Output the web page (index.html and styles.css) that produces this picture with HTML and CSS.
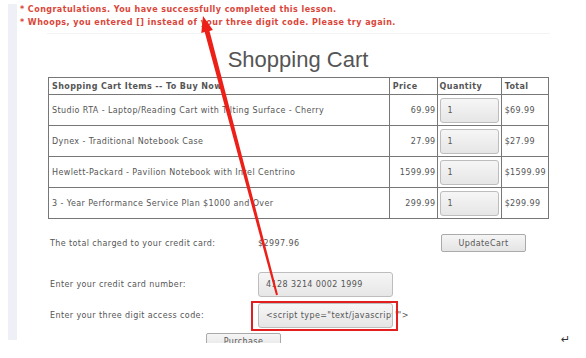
FILE: index.html
```html
<!DOCTYPE html>
<html>
<head>
<meta charset="utf-8">
<link rel="stylesheet" href="styles.css">
</head>
<body>
<div class="frame">
  <div class="strip"></div>
  <div class="content">
    <div class="msgs">
      <div>* Congratulations. You have successfully completed this lesson.</div>
      <div>* Whoops, you entered [] instead of your three digit code. Please try again.</div>
    </div>
    <div class="main">
      <div class="rule"></div>
      <h1 class="title">Shopping Cart</h1>
      <table class="cart">
        <tr class="head">
          <th class="c-item">Shopping Cart Items -- To Buy Now</th>
          <th class="c-price">Price</th>
          <th class="c-qty">Quantity</th>
          <th class="c-total">Total</th>
        </tr>
        <tr>
          <td class="c-item">Studio RTA - Laptop/Reading Cart with Tilting Surface - Cherry</td>
          <td class="c-price num">69.99</td>
          <td class="c-qty"><input class="qty" value="1"></td>
          <td class="c-total">$69.99</td>
        </tr>
        <tr>
          <td class="c-item">Dynex - Traditional Notebook Case</td>
          <td class="c-price num">27.99</td>
          <td class="c-qty"><input class="qty" value="1"></td>
          <td class="c-total">$27.99</td>
        </tr>
        <tr>
          <td class="c-item">Hewlett-Packard - Pavilion Notebook with Intel Centrino</td>
          <td class="c-price num">1599.99</td>
          <td class="c-qty"><input class="qty" value="1"></td>
          <td class="c-total">$1599.99</td>
        </tr>
        <tr>
          <td class="c-item">3 - Year Performance Service Plan $1000 and Over</td>
          <td class="c-price num">299.99</td>
          <td class="c-qty"><input class="qty" value="1"></td>
          <td class="c-total">$299.99</td>
        </tr>
      </table>
      <div class="form">
        <div class="frow r1">
          <span class="label">The total charged to your credit card:</span>
          <span class="value">$2997.96</span>
          <span><button class="btn update">UpdateCart</button></span>
        </div>
        <div class="frow r2">
          <span class="label">Enter your credit card number:</span>
          <span><input class="field" value="4128 3214 0002 1999"></span>
          <span></span>
        </div>
        <div class="frow r3">
          <span class="label">Enter your three digit access code:</span>
          <span class="codecell"><span class="field codefield">&lt;script type="text/javascript"&gt;alert(document.cookie);&lt;/script&gt;</span><span class="tail">'"&gt;</span></span>
          <span></span>
        </div>
        <div class="frow r4">
          <button class="btn purchase">Purchase</button>
        </div>
      </div>
    </div>
  </div>
</div>
<div class="highlight"></div>
<svg class="arrow" width="586" height="358" viewBox="0 0 586 358">
  <polygon points="203,16 212.9,30 209.5,30.9 278,294.7 276,295.3 204.7,32.1 201.3,33" fill="#ec2018"/>
</svg>
<span class="ret">↵</span>
</body>
</html>
```

FILE: styles.css
```css
html, body {
  margin: 0;
  padding: 0;
  background: #fff;
}

body {
  width: 586px;
  height: 358px;
  overflow: hidden;
  position: relative;
  font-family: "DejaVu Sans", sans-serif;
  font-size: 8px;
  letter-spacing: 0.4px;
  color: #555;
}

.frame {
  display: flex;
  height: 343px;
  overflow: hidden;
}

.strip {
  width: 9px;
  height: 336px;
  margin: 4px 0 0 8px;
  background: #efeff8;
  flex: none;
}

.content {
  flex: 1;
  padding-left: 3px;
}

.msgs {
  margin-top: 3px;
  font-weight: bold;
  color: #da463a;
  line-height: 13px;
  letter-spacing: 0.45px;
}

.main {
  margin-left: 28px;
  width: 500px;
}

.rule {
  height: 1px;
  margin: 4px 0 0 -1px;
  width: 503px;
  background: #f3f3f3;
}

.title {
  margin: 13px 0 4px;
  text-align: center;
  font-family: "Liberation Sans", Arial, sans-serif;
  font-weight: normal;
  font-size: 22px;
  line-height: 26px;
  letter-spacing: 0;
  color: #555;
}

.cart {
  width: 501px;
  border-collapse: collapse;
  border: 1px solid #777;
}

.cart th, .cart td {
  border: 1px solid #777;
  padding: 0 2px 0 3px;
  text-align: left;
  white-space: nowrap;
  font-size: 8px;
  overflow: hidden;
}

.cart th {
  font-weight: bold;
  height: 16px;
  color: #555;
}

.cart td {
  height: 30px;
}

.c-item { width: 336px; }
.c-price { width: 42px; }
.c-qty { width: 58px; }
.c-qty.c-qty { padding: 0 2px; }
.num { text-align: right !important; padding-right: 1px !important; }

.qty, .field {
  box-sizing: border-box;
  height: 25px;
  border: 1px solid #bdbdbd;
  border-radius: 3px;
  background: linear-gradient(#f6f6f6, #e6e6e6);
  font-family: "DejaVu Sans", sans-serif;
  font-size: 8px;
  letter-spacing: 0.4px;
  color: #555;
  padding: 0 0 0 7px;
  margin: 0;
  display: block;
}

.qty {
  width: 59px;
}

.field {
  width: 135px;
}

.codefield {
  display: flex;
  align-items: center;
  white-space: nowrap;
  overflow: hidden;
  flex: none;
}

.form {
  margin-top: 9px;
  display: flex;
  flex-direction: column;
}

.frow {
  display: grid;
  grid-template-columns: 210px 183px auto;
  align-items: center;
}

.r1 { height: 30px; }
.r2 { height: 37px; margin-top: 8px; }
.r3 { height: 25px; }
.r4 { height: 27px; display: flex; padding-left: 158px; }

.label {
  padding-left: 2px;
}

.codecell {
  display: flex;
  align-items: center;
}

.tail {
  margin-left: 2px;
}

.btn {
  box-sizing: border-box;
  height: 18px;
  border: 1px solid #aaa;
  border-radius: 2px;
  background: linear-gradient(#f5f5f5, #e4e4e4);
  font-family: "DejaVu Sans", sans-serif;
  font-size: 8px;
  letter-spacing: 0.4px;
  color: #555;
  padding: 0;
}

.update { width: 85px; }
.purchase { width: 75px; }

.highlight {
  position: absolute;
  left: 251px;
  top: 301px;
  width: 143px;
  height: 26px;
  border: 2px solid #e41e1e;
}

.arrow {
  position: absolute;
  left: 0;
  top: 0;
  pointer-events: none;
}

.ret {
  position: absolute;
  left: 561px;
  top: 333px;
  font-size: 11px;
  color: #333;
}
```
